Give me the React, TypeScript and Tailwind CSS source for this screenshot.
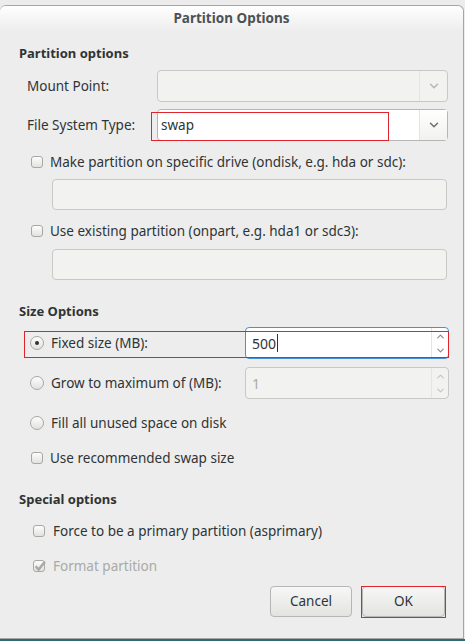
import { ChevronDown, ChevronUp } from 'lucide-react';

const font = { fontFamily: '"Noto Sans", "Open Sans", sans-serif' };

function Checkbox({ checked = false, disabled = false }: { checked?: boolean; disabled?: boolean }) {
  return (
    <span className="relative w-[12px] h-[12px] rounded-[3px] border border-[#a8a8a5] bg-gradient-to-b from-[#fdfdfd] to-[#e2e2e0] shrink-0">
      {checked && (
        <svg viewBox="0 0 13 13" className="absolute -left-px -top-[2px] w-[14px] h-[14px]">
          <path d="M2.5 6.8 L5.2 9.8 L11 2.5" fill="none" stroke={disabled ? '#a9aaa8' : '#2e3436'} strokeWidth="2.2" />
        </svg>
      )}
    </span>
  );
}

function Radio({ checked = false }: { checked?: boolean }) {
  return (
    <span className="flex items-center justify-center w-[14px] h-[14px] rounded-full border border-[#a8a8a5] bg-gradient-to-b from-[#fdfdfd] to-[#e2e2e0] shrink-0">
      {checked && <span className="w-[4px] h-[4px] rounded-full bg-[#2e3436]" />}
    </span>
  );
}

function Combo({ value, enabled }: { value?: string; enabled?: boolean }) {
  return (
    <div
      className={
        'flex h-[32px] w-[291px] rounded-[4px] border ' +
        (enabled ? 'border-[#b6b6b3] bg-white' : 'border-[#c8c8c5] bg-[#f2f2f1]')
      }
    >
      <div className="flex-1 flex items-center pl-[3px] text-[13.5px] text-[#2e3436]">{value}</div>
      <div
        className={
          'w-[28px] flex items-center justify-center border-l ' +
          (enabled ? 'border-[#e4e4e2] bg-gradient-to-b from-[#ffffff] to-[#f1f1f0]' : 'border-[#e4e4e2]')
        }
      >
        <ChevronDown size={14} strokeWidth={2.6} color={enabled ? '#6f7272' : '#b6b8b8'} />
      </div>
    </div>
  );
}

function Spin({ value, enabled }: { value: string; enabled?: boolean }) {
  return (
    <div
      className={
        'flex h-[32px] w-[204px] rounded-[4px] border ' +
        (enabled ? 'border-[#4a90d9] bg-white' : 'border-[#c8c8c5] bg-[#f2f2f1]')
      }
    >
      <div className={'flex-1 flex items-center pl-[6px] text-[14px] ' + (enabled ? 'text-[#2e3436]' : 'text-[#a9aaa8]')}>
        {value}
        {enabled && <span className="ml-px w-px h-[18px] bg-[#2e3436]" />}
      </div>
      <div className="w-[17px] flex flex-col items-center justify-center border-l border-[#e4e4e2]">
        <ChevronUp size={11} strokeWidth={2.6} color={enabled ? '#8b8e8f' : '#c4c6c6'} />
        <ChevronDown size={11} strokeWidth={2.6} color={enabled ? '#8b8e8f' : '#c4c6c6'} className="mt-[3px]" />
      </div>
    </div>
  );
}

export default function App() {
  return (
    <div className="w-[465px] h-[641px] flex flex-col bg-[#ececec] text-[#2e3436] overflow-hidden" style={font}>
      <div className="h-[5px] shrink-0" />
      <div className="h-[634px] shrink-0 w-[464px] flex flex-col rounded-t-[6px] border-t border-r border-b border-[#a5a5a3] bg-[#ededed]">
        <div className="h-[25px] shrink-0 flex items-center justify-center rounded-t-[6px] bg-gradient-to-b from-[#ffffff] to-[#ededed] text-[13.5px] font-bold text-[#4b5254]">
          Partition Options
        </div>

        <div className="flex flex-col pl-[19px]">
          <div className="mt-[13px] h-[20px] flex items-center text-[13px] font-bold">Partition options</div>

          <div className="mt-[6px] flex items-center">
            <span className="w-[138px] pl-[8px] text-[13.5px]">Mount Point:</span>
            <Combo />
          </div>

          <div className="relative mt-[7px] flex items-center">
            <span className="w-[138px] pl-[8px] text-[13.5px]">File System Type:</span>
            <Combo value="swap" enabled />
            <div className="absolute left-[132px] top-[3px] w-[238px] h-[29px] border border-[#e0242c]" />
          </div>

          <div className="mt-[11px] h-[20px] flex items-center gap-[7px] pl-[12px] text-[13.5px]">
            <Checkbox />
            <span>Make partition on specific drive (ondisk, e.g. hda or sdc):</span>
          </div>
          <div className="mt-[7px] ml-[33px] h-[31px] w-[395px] rounded-[4px] border border-[#c8c8c5] bg-[#f2f2f1]" />

          <div className="mt-[11px] h-[20px] flex items-center gap-[7px] pl-[12px] text-[13.5px]">
            <Checkbox />
            <span>Use existing partition (onpart, e.g. hda1 or sdc3):</span>
          </div>
          <div className="mt-[8px] ml-[33px] h-[31px] w-[395px] rounded-[4px] border border-[#c8c8c5] bg-[#f2f2f1]" />

          <div className="mt-[22px] h-[20px] flex items-center text-[13px] font-bold">Size Options</div>

          <div className="relative mt-[5px] flex items-center">
            <div className="w-[226px] flex items-center gap-[7px] pl-[11px] text-[13.5px]">
              <Radio checked />
              <span>Fixed size (MB):</span>
            </div>
            <Spin value="500" enabled />
            <div className="absolute left-[5px] top-[4px] w-[425px] h-[27px] border border-[#e0242c]" />
          </div>

          <div className="mt-[8px] flex items-center">
            <div className="w-[226px] flex items-center gap-[7px] pl-[11px] text-[13.5px]">
              <Radio />
              <span>Grow to maximum of (MB):</span>
            </div>
            <Spin value="1" />
          </div>

          <div className="mt-[14px] h-[20px] flex items-center gap-[7px] pl-[11px] text-[13.5px]">
            <Radio />
            <span>Fill all unused space on disk</span>
          </div>

          <div className="mt-[15px] h-[20px] flex items-center gap-[7px] pl-[12px] text-[13.5px]">
            <Checkbox />
            <span>Use recommended swap size</span>
          </div>

          <div className="mt-[22px] h-[20px] flex items-center text-[13px] font-bold">Special options</div>

          <div className="mt-[11px] h-[20px] flex items-center gap-[8px] pl-[14px] text-[13.5px]">
            <Checkbox />
            <span>Force to be a primary partition (asprimary)</span>
          </div>

          <div className="mt-[15px] h-[20px] flex items-center gap-[8px] pl-[14px] text-[13.5px] text-[#a9aaa8]">
            <Checkbox checked disabled />
            <span>Format partition</span>
          </div>

          <div className="mt-[10px] flex justify-end gap-[10px] pr-[18px]">
            <button className="h-[31px] w-[82px] rounded-[4px] border border-[#b6b6b3] bg-gradient-to-b from-[#f7f7f7] to-[#e3e3e1] text-[13.5px] text-[#2e3436]">
              Cancel
            </button>
            <div className="relative">
              <button className="h-[31px] w-[83px] rounded-[4px] border border-[#b6b6b3] bg-gradient-to-b from-[#f7f7f7] to-[#e3e3e1] text-[13.5px] text-[#2e3436]">
                OK
              </button>
              <div className="absolute -left-px top-0 w-[85px] h-[32px] border border-[#e0242c]" />
            </div>
          </div>
        </div>
      </div>
      <div className="flex-1 bg-[#2d6c76]" />
    </div>
  );
}
